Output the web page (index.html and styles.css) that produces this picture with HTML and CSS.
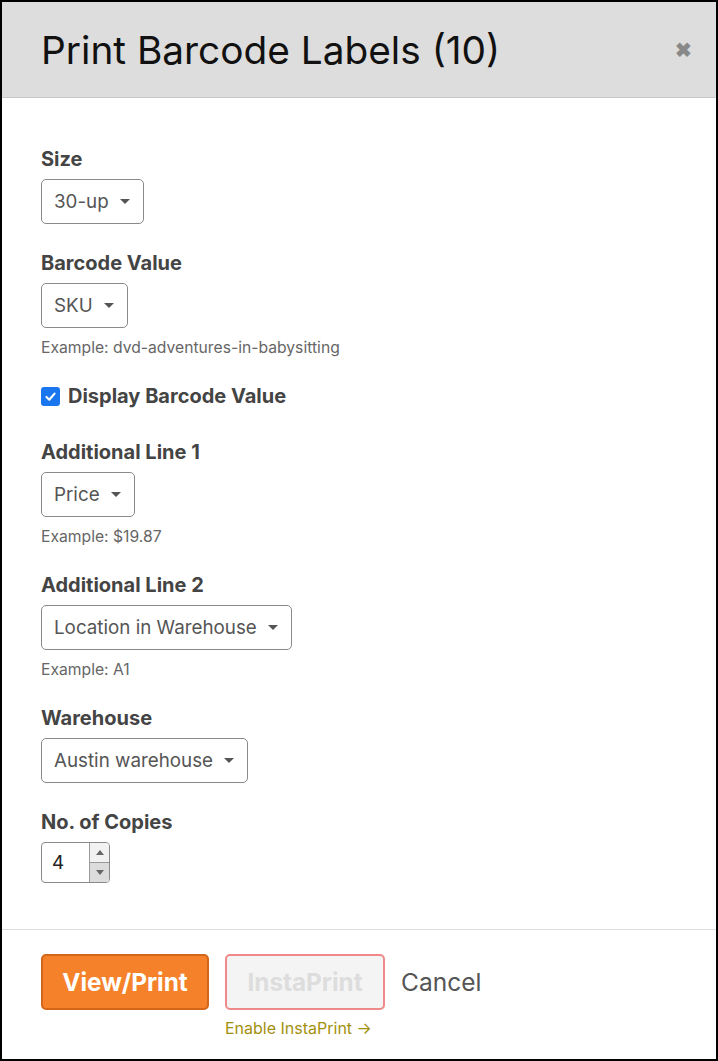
FILE: index.html
```html
<!DOCTYPE html>
<html>
<head>
<meta charset="utf-8">
<link rel="stylesheet" href="styles.css">
</head>
<body>
<div class="modal">
  <div class="modal-header">
    <h1 class="modal-title">Print Barcode Labels (10)</h1>
    <span class="close">&#x2716;</span>
  </div>
  <div class="modal-body">
    <div class="field">
      <label class="field-label">Size</label>
      <div class="select">30-up <span class="caret"></span></div>
    </div>
    <div class="field">
      <label class="field-label">Barcode Value</label>
      <div class="select">SKU <span class="caret"></span></div>
      <div class="hint">Example: dvd-adventures-in-babysitting</div>
    </div>
    <div class="field check-field">
      <span class="checkbox"><svg viewBox="0 0 16 16" width="13" height="13"><path d="M3 8.5 L6.5 12 L13 4.5" fill="none" stroke="#fff" stroke-width="2.6" stroke-linecap="round" stroke-linejoin="round"/></svg></span>
      <span class="field-label inline">Display Barcode Value</span>
    </div>
    <div class="field">
      <label class="field-label">Additional Line 1</label>
      <div class="select">Price <span class="caret"></span></div>
      <div class="hint">Example: $19.87</div>
    </div>
    <div class="field">
      <label class="field-label">Additional Line 2</label>
      <div class="select">Location in Warehouse <span class="caret"></span></div>
      <div class="hint">Example: A1</div>
    </div>
    <div class="field">
      <label class="field-label">Warehouse</label>
      <div class="select">Austin warehouse <span class="caret"></span></div>
    </div>
    <div class="field">
      <label class="field-label">No. of Copies</label>
      <div class="number">
        <span class="number-value">4</span>
        <span class="spinner">
          <span class="spin up"><span class="tri-up"></span></span>
          <span class="spin down"><span class="tri-down"></span></span>
        </span>
      </div>
    </div>
  </div>
  <div class="modal-footer">
    <button class="btn btn-primary">View/Print</button>
    <div class="insta">
      <button class="btn btn-disabled">InstaPrint</button>
      <a class="enable-link">Enable InstaPrint &#8594;</a>
    </div>
    <a class="cancel">Cancel</a>
  </div>
</div>
</body>
</html>
```
FILE: styles.css
```css
html, body {
  margin: 0;
  padding: 0;
  background: #000;
}
body {
  font-family: Inter, "Noto Sans", sans-serif;
  color: #444;
}
.modal {
  box-sizing: border-box;
  width: 718px;
  height: 1061px;
  border: 2px solid #000;
  background: #fff;
  display: flex;
  flex-direction: column;
}
.modal-header {
  height: 95px;
  background: #ddd;
  border-bottom: 1px solid #c8c8c8;
  display: flex;
  align-items: center;
  justify-content: space-between;
  padding: 0 24px 0 39px;
}
.modal-title {
  margin: 0;
  font-size: 38.8px;
  font-weight: 400;
  color: #111;
}
.close {
  color: #888;
  font-size: 20px;
  font-weight: 700;
}
.modal-body {
  flex: 1;
  padding: 50px 39px 0;
}
.field {
  margin-bottom: 28px;
}
.field-label {
  display: block;
  font-size: 20px;
  font-weight: 700;
  color: #444;
  line-height: 22px;
  margin-bottom: 9px;
}
.field-label.inline {
  display: inline;
  margin: 0;
}
.select {
  display: inline-flex;
  align-items: center;
  box-sizing: border-box;
  height: 45px;
  padding: 0 13px 0 12px;
  border: 1px solid #8a8a8a;
  border-radius: 5px;
  font-size: 18.8px;
  color: #555;
  gap: 11px;
}
.caret {
  width: 0;
  height: 0;
  border-left: 5px solid transparent;
  border-right: 5px solid transparent;
  border-top: 5px solid #555;
}
.hint {
  margin-top: 10px;
  font-size: 15.7px;
  line-height: 19px;
  color: #666;
}
.check-field {
  display: flex;
  align-items: center;
  gap: 8px;
  margin-bottom: 34px;
}
.checkbox {
  width: 19px;
  height: 19px;
  border-radius: 3px;
  background: #1a76ee;
  display: inline-flex;
  align-items: center;
  justify-content: center;
}
.number {
  display: inline-flex;
  box-sizing: border-box;
  height: 41px;
  width: 69px;
  border: 1px solid #8a8a8a;
  border-radius: 4px;
  overflow: hidden;
}
.number-value {
  flex: 1;
  display: flex;
  align-items: center;
  padding-left: 10px;
  font-size: 18.8px;
  color: #222;
}
.spinner {
  width: 19px;
  display: flex;
  flex-direction: column;
  border-left: 1px solid #999;
  background: #f2f2f2;
}
.spin {
  flex: 1;
  display: flex;
  align-items: center;
  justify-content: center;
}
.spin.down {
  border-top: 1px solid #999;
  background: #dcdcdc;
}
.tri-up, .tri-down {
  width: 0;
  height: 0;
  border-left: 4px solid transparent;
  border-right: 4px solid transparent;
}
.tri-up { border-bottom: 5px solid #666; }
.tri-down { border-top: 5px solid #666; }
.modal-footer {
  border-top: 1px solid #ddd;
  height: 130px;
  box-sizing: border-box;
  padding: 24px 39px 0;
  display: flex;
  align-items: flex-start;
  gap: 16px;
}
.btn {
  font-family: Inter, "Noto Sans", sans-serif;
  box-sizing: border-box;
  height: 56px;
  border-radius: 5px;
  font-size: 24.3px;
  font-weight: 700;
  padding: 0;
}
.btn-primary {
  width: 168px;
  background: #f5822a;
  border: 2px solid #d4661a;
  color: #fff;
}
.btn-disabled {
  width: 160px;
  background: #f4f4f4;
  border: 2px solid #f08a8a;
  color: #ddd;
}
.insta {
  display: flex;
  flex-direction: column;
  align-items: flex-start;
}
.enable-link {
  margin-top: 8px;
  font-size: 16px;
  color: #a3900e;
}
.cancel {
  font-size: 24.5px;
  color: #555;
  line-height: 56px;
}
```
